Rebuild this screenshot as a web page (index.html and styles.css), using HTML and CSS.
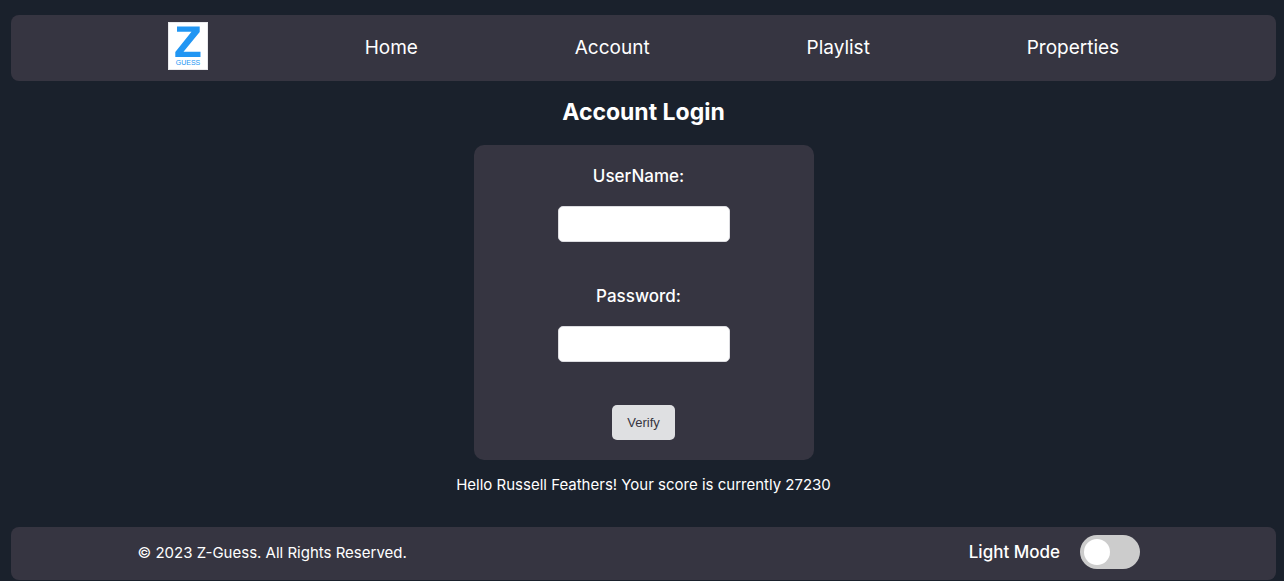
FILE: index.html
```html
<!DOCTYPE html>
<html lang="en">
<head>
<meta charset="utf-8">
<meta name="viewport" content="width=device-width, initial-scale=1">
<title>Z-Guess</title>
<link rel="stylesheet" href="styles.css">
</head>
<body>
<header>
  <nav class="navbar">
    <a class="logo" href="#" aria-label="Z-Guess">
      <svg width="40" height="48" viewBox="0 0 40 48">
        <rect width="40" height="48" fill="#e9e9ec"/>
        <rect x="1" y="1" width="38" height="46" fill="#fff"/>
        <path d="M9 4.5H31.7V10L15.5 29.7H32.5V35H7.3V30L23.5 9.8H9Z" fill="#2196f3"/>
        <text class="logo-text" x="20" y="42.5" text-anchor="middle">GUESS</text>
      </svg>
    </a>
    <a class="nav-link" href="#">Home</a>
    <a class="nav-link" href="#">Account</a>
    <a class="nav-link" href="#">Playlist</a>
    <a class="nav-link" href="#">Properties</a>
  </nav>
</header>
<main class="content">
  <h1 class="title">Account Login</h1>
  <form class="login">
    <div class="field">
      <label class="label" for="username">UserName:</label>
      <input class="input" id="username" type="text">
    </div>
    <div class="field">
      <label class="label" for="password">Password:</label>
      <input class="input" id="password" type="password">
    </div>
    <button class="verify" type="button">Verify</button>
  </form>
  <p class="message">Hello Russell Feathers! Your score is currently 27230</p>
</main>
<footer class="footer">
  <span class="copyright">© 2023 Z-Guess. All Rights Reserved.</span>
  <div class="mode">
    <label class="mode-label" for="mode">Light Mode</label>
    <input class="switch" id="mode" type="checkbox" role="switch">
  </div>
</footer>
</body>
</html>
```
FILE: styles.css
```css
* {
  box-sizing: border-box;
}

body {
  margin: 0;
  padding: 15px 8px 1px 11px;
  min-height: 100vh;
  display: flex;
  flex-direction: column;
  background: #1a212c;
  color: #fff;
  font-family: Inter, "Liberation Sans", sans-serif;
  font-size: 16px;
}

.navbar {
  display: flex;
  justify-content: space-evenly;
  padding: 7px 0 11px;
  border-radius: 8px;
  background: #363541;
}

.logo,
.logo svg {
  display: block;
}

.logo-text {
  font: 7px "Liberation Sans", sans-serif;
  fill: #2196f3;
}

.nav-link {
  padding-top: 14px;
  color: #fff;
  font-size: 19px;
  line-height: 24px;
  text-decoration: none;
}

.content {
  display: flex;
  flex: 1;
  flex-direction: column;
  align-items: center;
}

.title {
  margin: 16px 0 18px;
  font-size: 23px;
  font-weight: 700;
  line-height: 30px;
}

.login {
  display: flex;
  flex-direction: column;
  align-items: center;
  width: 340px;
  max-width: 100%;
  padding: 20px;
  border-radius: 10px;
  background: #363541;
}

.field {
  display: flex;
  flex-direction: column;
  align-items: center;
  margin-bottom: 43px;
}

.label {
  margin: 0 10px 19px 0;
  font-size: 17px;
  font-weight: 500;
  line-height: 22px;
}

.input {
  width: 172px;
  height: 36px;
  padding: 8px;
  border: 1px solid #dcdce0;
  border-radius: 5px;
  background: #fff;
}

.verify {
  padding: 10px 15px;
  border: 0;
  border-radius: 5px;
  background: #dfe0e2;
  color: #363541;
  font: 13px/15px "Liberation Sans", sans-serif;
}

.message {
  margin: 15px 0 32px;
  font-size: 15px;
  line-height: 20px;
}

.footer {
  display: flex;
  align-items: center;
  justify-content: space-between;
  padding: 8px 136px 11px 10%;
  border-radius: 8px;
  background: #363541;
}

.copyright {
  font-size: 15px;
}

.mode {
  display: flex;
  align-items: center;
  gap: 20px;
}

.mode-label {
  font-size: 17px;
  font-weight: 500;
}

.switch {
  appearance: none;
  width: 60px;
  height: 34px;
  margin: 0;
  padding: 4px;
  border-radius: 17px;
  background: #ccc;
}

.switch::before {
  content: "";
  display: block;
  width: 26px;
  height: 26px;
  border-radius: 50%;
  background: #fff;
}

.switch:checked::before {
  margin-left: 26px;
}
```
